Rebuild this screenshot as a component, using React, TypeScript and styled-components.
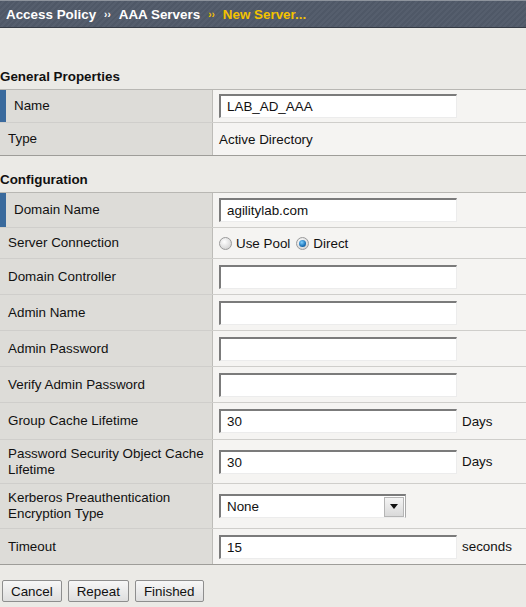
import React from "react";
import styled, { createGlobalStyle } from "styled-components";

const Global = createGlobalStyle`
  html, body { margin: 0; padding: 0; background: #ebeae6; }
  body { font-family: "Liberation Sans", Arial, sans-serif; font-size: 13.4px; color: #111; }
`;

const Page = styled.div`
  width: 526px;
  min-height: 607px;
  background: #ebeae6;
`;

const Header = styled.div`
  box-sizing: border-box;
  height: 28px;
  border-top: 1px solid #8d939c;
  border-bottom: 1px solid #353b45;
  background: repeating-linear-gradient(135deg, #4f5867 0 2px, #555e6d 2px 4px);
  display: flex;
  align-items: center;
  padding-left: 6px;
  gap: 8px;
  font-weight: bold;
  font-size: 13.4px;
  color: #fff;
`;

const Crumb = styled.span<{ $current?: boolean }>`
  color: ${(p) => (p.$current ? "#f3c200" : "#ffffff")};
`;

const Sep = styled.span<{ $current?: boolean }>`
  font-size: 10px;
  color: ${(p) => (p.$current ? "#f3c200" : "#ffffff")};
`;

const SectionTitle = styled.div<{ $top: number }>`
  margin-top: ${(p) => p.$top}px;
  height: 16px;
  line-height: 16px;
  font-weight: bold;
  margin-bottom: 4px;
`;

const Table = styled.div`
  border-top: 1px solid #b8b7b3;
  border-bottom: 1px solid #9e9d99;
`;

const Row = styled.div<{ $h: number }>`
  box-sizing: border-box;
  display: grid;
  grid-template-columns: 213px 1fr;
  height: ${(p) => p.$h}px;
  border-bottom: 1px solid #cfcecb;
  &:last-child { border-bottom: none; }
`;

const Label = styled.div<{ $marked?: boolean }>`
  background: #dddcd8;
  border-right: 1px solid #bdbcb8;
  border-left: ${(p) => (p.$marked ? "6px solid #3a6a9d" : "none")};
  padding-left: 8px;
  display: flex;
  align-items: center;
  line-height: 16px;
`;

const Value = styled.div`
  background: #f5f4f2;
  display: flex;
  align-items: center;
  padding-left: 6px;
  gap: 5px;
`;

const TextInput = styled.input`
  box-sizing: border-box;
  width: 238px;
  height: 24px;
  border-top: 2px solid #7b7b7b;
  border-left: 2px solid #7b7b7b;
  border-right: 1px solid #ececec;
  border-bottom: 1px solid #ececec;
  background: #fff;
  padding: 0 6px;
  font-family: "Liberation Sans", Arial, sans-serif;
  font-size: 13.4px;
  color: #111;
  outline: none;
`;

const Unit = styled.span``;

const RadioGroup = styled.div`
  display: flex;
  align-items: center;
  gap: 4px;
`;

const RadioCircle = styled.span<{ $on?: boolean }>`
  box-sizing: border-box;
  width: 13px;
  height: 13px;
  border-radius: 50%;
  border: 1px solid #9a9a9a;
  background: radial-gradient(circle at 40% 35%, #ffffff 0%, #d8d8d8 70%, #c4c4c4 100%);
  display: inline-flex;
  align-items: center;
  justify-content: center;
  &::after {
    content: "";
    display: ${(p) => (p.$on ? "block" : "none")};
    width: 7px;
    height: 7px;
    border-radius: 50%;
    background: radial-gradient(circle at 40% 35%, #7fd0ff 0%, #1a72b8 60%, #0b3f72 100%);
  }
`;

const RadioLabel = styled.span`
  margin-right: 2px;
`;

const Select = styled.div`
  box-sizing: border-box;
  width: 187px;
  height: 24px;
  border-top: 2px solid #7b7b7b;
  border-left: 2px solid #7b7b7b;
  border-right: 1px solid #a8a8a8;
  border-bottom: 1px solid #ececec;
  background: #fff;
  display: flex;
  align-items: center;
  justify-content: space-between;
  padding-left: 6px;
`;

const Arrow = styled.span`
  box-sizing: border-box;
  width: 20px;
  height: 20px;
  margin-right: 1px;
  border: 1px solid #b5b5b5;
  background: linear-gradient(#f4f4f4, #d9d9d9);
  display: flex;
  align-items: center;
  justify-content: center;
  &::after {
    content: "";
    border-left: 4px solid transparent;
    border-right: 4px solid transparent;
    border-top: 5px solid #111;
  }
`;

const Buttons = styled.div`
  display: flex;
  gap: 6px;
  padding: 15px 0 0 2px;
`;

const Button = styled.button`
  box-sizing: border-box;
  height: 22px;
  padding: 0 8px;
  border: 1px solid #8e8e8e;
  border-radius: 2px;
  background: linear-gradient(#f7f7f7, #dedede);
  font-family: "Liberation Sans", Arial, sans-serif;
  font-size: 13.4px;
  color: #111;
`;

type Field =
  | { label: string; kind: "input"; value?: string; unit?: string; h: number; marked?: boolean }
  | { label: string; kind: "text"; value: string; h: number; marked?: boolean }
  | { label: string; kind: "radio"; h: number }
  | { label: string; kind: "select"; value: string; h: number };

const general: Field[] = [
  { label: "Name", kind: "input", value: "LAB_AD_AAA", h: 33, marked: true },
  { label: "Type", kind: "text", value: "Active Directory", h: 32 },
];

const config: Field[] = [
  { label: "Domain Name", kind: "input", value: "agilitylab.com", h: 35, marked: true },
  { label: "Server Connection", kind: "radio", h: 31 },
  { label: "Domain Controller", kind: "input", h: 36 },
  { label: "Admin Name", kind: "input", h: 36 },
  { label: "Admin Password", kind: "input", h: 36 },
  { label: "Verify Admin Password", kind: "input", h: 36 },
  { label: "Group Cache Lifetime", kind: "input", value: "30", unit: "Days", h: 37 },
  { label: "Password Security Object Cache Lifetime", kind: "input", value: "30", unit: "Days", h: 44 },
  { label: "Kerberos Preauthentication Encryption Type", kind: "select", value: "None", h: 45 },
  { label: "Timeout", kind: "input", value: "15", unit: "seconds", h: 35 },
];

const twoLine: Record<string, [string, string]> = {
  "Password Security Object Cache Lifetime": ["Password Security Object Cache", "Lifetime"],
  "Kerberos Preauthentication Encryption Type": ["Kerberos Preauthentication", "Encryption Type"],
};

const renderValue = (f: Field) => {
  switch (f.kind) {
    case "input":
      return (
        <>
          <TextInput defaultValue={f.value ?? ""} />
          {f.unit && <Unit>{f.unit}</Unit>}
        </>
      );
    case "text":
      return <span>{f.value}</span>;
    case "radio":
      return (
        <RadioGroup>
          <RadioCircle />
          <RadioLabel>Use Pool</RadioLabel>
          <RadioCircle $on />
          <RadioLabel>Direct</RadioLabel>
        </RadioGroup>
      );
    case "select":
      return (
        <Select>
          <span>{f.value}</span>
          <Arrow />
        </Select>
      );
  }
};

const FieldTable = ({ fields }: { fields: Field[] }) => (
  <Table>
    {fields.map((f) => {
      const lines = twoLine[f.label];
      return (
        <Row key={f.label} $h={f.h}>
          <Label $marked={"marked" in f && f.marked}>
            {lines ? (
              <span>
                {lines[0]}
                <br />
                {lines[1]}
              </span>
            ) : (
              f.label
            )}
          </Label>
          <Value>{renderValue(f)}</Value>
        </Row>
      );
    })}
  </Table>
);

export default function App() {
  return (
    <Page>
      <Global />
      <Header>
        <Crumb>Access Policy</Crumb>
        <Sep>››</Sep>
        <Crumb>AAA Servers</Crumb>
        <Sep $current>››</Sep>
        <Crumb $current>New Server...</Crumb>
      </Header>
      <SectionTitle $top={41}>General Properties</SectionTitle>
      <FieldTable fields={general} />
      <SectionTitle $top={16}>Configuration</SectionTitle>
      <FieldTable fields={config} />
      <Buttons>
        <Button>Cancel</Button>
        <Button>Repeat</Button>
        <Button>Finished</Button>
      </Buttons>
    </Page>
  );
}
